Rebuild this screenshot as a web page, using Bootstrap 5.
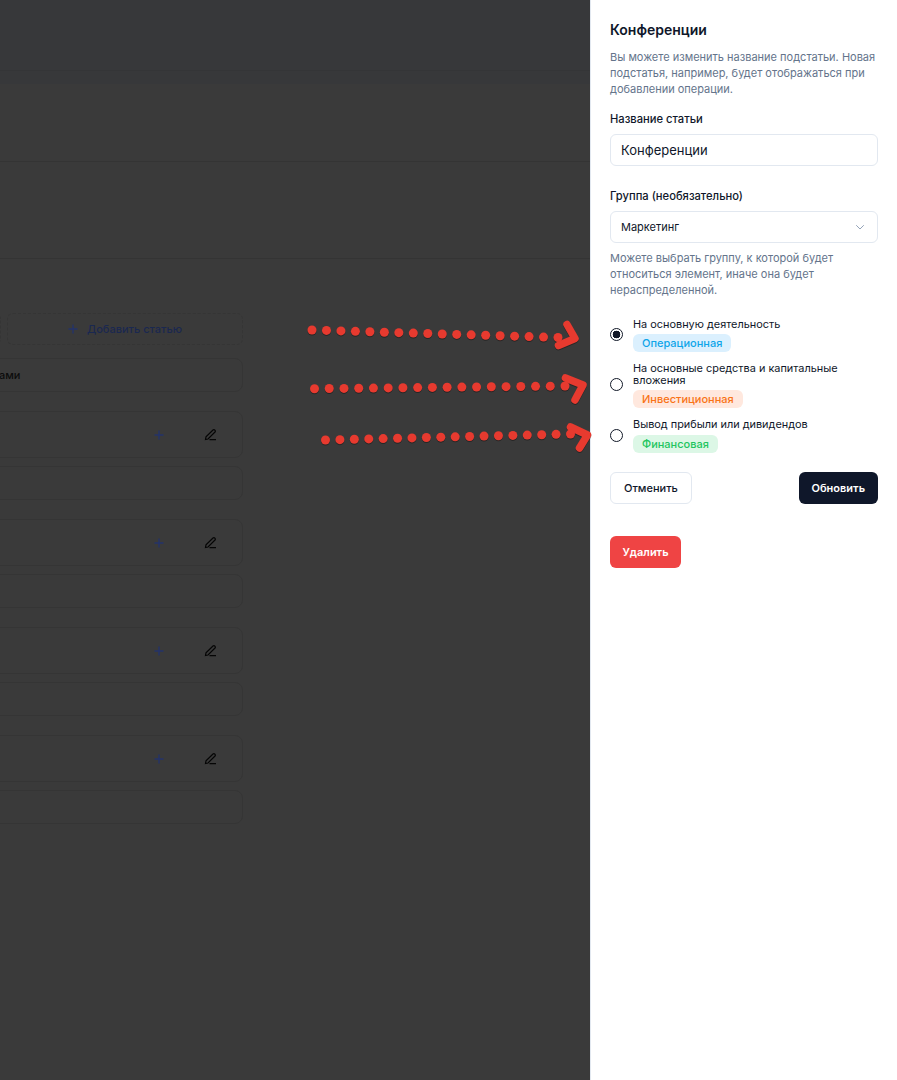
<!DOCTYPE html>
<html lang="ru">
<head>
    <meta charset="UTF-8">
    <meta name="viewport" content="width=device-width, initial-scale=1.0">
    <title>Конференции</title>
    <link rel="stylesheet" href="https://cdn.jsdelivr.net/npm/bootstrap@5.3.2/dist/css/bootstrap.min.css">
    <style>
body {
    font-family: Inter, "Liberation Sans", sans-serif;
    background-color: #3a3a3a;
    height: 1080px;
    overflow: hidden;
}
.page-wrap { position: relative; height: 1080px; }

/* dimmed page behind the drawer */
.dim-side { width: 590px; overflow: hidden; background-color: #3a3a3a; }
.dim-top { height: 84px; background-color: #37383a; }
.dim-top-line { height: 71px; border-bottom: 1px solid #343537; }
.dim-band-a { height: 78px; border-bottom: 1px solid #343434; }
.dim-band-b { height: 97px; border-bottom: 1px solid #343434; }
.dim-list { width: 263px; margin-left: -20px; margin-top: 54px; }
.dim-add-row { gap: 6px; margin-bottom: 13px; }
.dim-add-small { width: 21px; height: 32px; border: 1px dashed #353535; border-radius: 6px; }
.dim-add {
    height: 32px;
    border: 1px dashed #353535;
    border-radius: 6px;
    color: #1a2850;
    font-size: 11px;
    font-weight: 500;
    gap: 9px;
}
.dim-box {
    border: 1px solid #353535;
    border-radius: 8px;
    color: #0c0c0c;
    font-size: 11px;
    font-weight: 500;
}
.dim-h34 { height: 34px; }
.dim-h47 { height: 47px; padding-right: 25px; }
.dim-group { margin-bottom: 19px; }
.dim-group .dim-h47 { margin-bottom: 8px; gap: 40px; }
.dim-first { margin-bottom: 19px; padding-left: 20px; }
.dim-first span { margin-left: -2px; }

/* drawer */
.side-panel {
    width: 307px;
    height: 1080px;
    background-color: #fff;
    border-left: 1px solid #e2e8f0;
    padding: 21px 19px 0 19px;
    color: #0f172a;
}
.panel-title { font-size: 14px; font-weight: 600; line-height: 17px; margin: 0 0 11px 0; }
.panel-note { font-size: 11px; line-height: 16px; color: #64748b; margin: 0; }
.field-label { font-size: 11.2px; font-weight: 500; line-height: 14px; margin: 15px 0 8px 0; display: block; }
.field-label-group { margin-top: 23px; }
.side-panel .form-control,
.side-panel .form-select {
    height: 32px;
    border-color: #e2e8f0;
    border-radius: 6px;
    box-shadow: none;
    color: #0f172a;
}
.side-panel .form-control { font-size: 13px; padding: 0 10px; }
.side-panel .form-select {
    font-size: 11px;
    padding: 0 10px;
    background-size: 10px 10px;
    background-position: right 12px center;
    background-image: url("data:image/svg+xml,%3csvg xmlns='http://www.w3.org/2000/svg' viewBox='0 0 10 10'%3e%3cpath fill='none' stroke='%2394a3b8' stroke-linecap='round' d='M1.5 3.5 5 7l3.5-3.5'/%3e%3c/svg%3e");
}
.group-note { margin-top: 7px; }
.kind-list { margin-top: 19px; gap: 9px; }
.kind-row { gap: 10px; }
.kind-row .form-check-input {
    width: 13px;
    height: 13px;
    margin: 0;
    flex-shrink: 0;
    border: 1px solid #111827;
    background-color: #fff;
    box-shadow: none;
}
.kind-row .form-check-input:checked {
    background-color: #fff;
    border-color: #111827;
    background-image: radial-gradient(circle, #111827 0 3.6px, #fff 4.1px);
}
.kind-text { font-size: 10.9px; line-height: 12px; color: #0f172a; padding-top: 1px; margin-bottom: 4px; }
.kind-row:last-child .kind-text { margin-bottom: 5px; }
.kind-tag {
    display: block;
    width: fit-content;
    height: 18px;
    line-height: 18px;
    padding: 0 9px;
    border-radius: 6px;
    font-size: 11px;
    font-weight: 500;
}
.tag-oper { background-color: #dbf0fe; color: #0ea5e9; }
.tag-inv { background-color: #ffe8de; color: #f97316; }
.tag-fin { background-color: #dcf7e6; color: #22c55e; }
.action-row { margin-top: 19px; }
.act-btn {
    height: 32px;
    font-size: 11px;
    font-weight: 500;
    border-radius: 6px;
    padding: 0 13px;
}
.act-cancel { border: 1px solid #e2e8f0; color: #0f172a; background-color: #fff; }
.act-save { background-color: #0f172a; color: #fff; border: 0; font-weight: 600; }
.act-del { background-color: #ef4444; color: #fff; border: 0; font-weight: 600; margin-top: 32px; width: 71px; padding: 0; }

/* hand drawn arrows, lie over everything */
.arrow-layer { position: absolute; left: 0; top: 0; pointer-events: none; filter: drop-shadow(0.5px 1px 0.7px rgba(0,0,0,.35)); }
.arrow-layer circle { fill: #e73a2f; }
.arrow-layer path { fill: none; stroke: #e73a2f; stroke-width: 7.5; stroke-linecap: round; stroke-linejoin: round; }
    </style>
</head>
<body>
    <div class="page-wrap d-flex">
        <div class="dim-side flex-shrink-0">
            <div class="dim-top"><div class="dim-top-line"></div></div>
            <div class="dim-band-a"></div>
            <div class="dim-band-b"></div>
            <div class="dim-list">
                <div class="d-flex dim-add-row">
                    <div class="dim-add-small"></div>
                    <div class="dim-add flex-grow-1 d-flex align-items-center justify-content-center">
                        <svg width="10" height="10" viewBox="0 0 10 10"><path d="M5 .5v9M.5 5h9" stroke="#24336a" stroke-width="1.4" fill="none"/></svg>
                        Добавить статью
                    </div>
                </div>
                <div class="dim-box dim-h34 dim-first d-flex align-items-center"><span>ами</span></div>
                <div id="dimGroups"></div>
            </div>
        </div>

        <div class="side-panel flex-shrink-0">
            <h5 class="panel-title">Конференции</h5>
            <p class="panel-note">Вы можете изменить название подстатьи. Новая подстатья, например, будет отображаться при добавлении операции.</p>

            <label class="field-label" for="itemName">Название статьи</label>
            <input id="itemName" type="text" class="form-control" value="Конференции">

            <label class="field-label field-label-group" for="itemGroup">Группа (необязательно)</label>
            <select id="itemGroup" class="form-select">
                <option>Маркетинг</option>
            </select>
            <p class="panel-note group-note">Можете выбрать группу, к которой будет относиться элемент, иначе она будет нераспределенной.</p>

            <div class="d-flex flex-column kind-list">
                <div class="d-flex align-items-center kind-row">
                    <input class="form-check-input" type="radio" name="kind" checked>
                    <div>
                        <div class="kind-text">На основную деятельность</div>
                        <span class="kind-tag tag-oper">Операционная</span>
                    </div>
                </div>
                <div class="d-flex align-items-center kind-row">
                    <input class="form-check-input" type="radio" name="kind">
                    <div>
                        <div class="kind-text">На основные средства и капитальные вложения</div>
                        <span class="kind-tag tag-inv">Инвестиционная</span>
                    </div>
                </div>
                <div class="d-flex align-items-center kind-row">
                    <input class="form-check-input" type="radio" name="kind">
                    <div>
                        <div class="kind-text">Вывод прибыли или дивидендов</div>
                        <span class="kind-tag tag-fin">Финансовая</span>
                    </div>
                </div>
            </div>

            <div class="d-flex justify-content-between action-row">
                <button class="btn act-btn act-cancel">Отменить</button>
                <button class="btn act-btn act-save">Обновить</button>
            </div>
            <button class="btn act-btn act-del">Удалить</button>
        </div>

        <svg id="arrows" class="arrow-layer" width="897" height="1080">
            <path d="M567 324.5 575 338.5 558.5 345.5"/>
            <path d="M565.5 378 583 385 575 400"/>
            <path d="M570.5 427 587.5 435 579.5 448"/>
        </svg>
    </div>

    <script>
        // repeated rows behind the overlay
        const groupsEl = document.getElementById('dimGroups');
        for (let i = 0; i < 4; i++) {
            groupsEl.innerHTML += `
                <div class="dim-group">
                    <div class="dim-box dim-h47 d-flex align-items-center justify-content-end">
                        <svg width="10" height="10" viewBox="0 0 10 10"><path d="M5 .5v9M.5 5h9" stroke="#24336a" stroke-width="1.4" fill="none"/></svg>
                        <svg width="13" height="13" viewBox="0 0 13 13"><path d="M1.5 11.5 2 8.9 9 2a1.2 1.2 0 0 1 1.7 0l.3.3a1.2 1.2 0 0 1 0 1.7L4 11ZM5.5 11.6H12" stroke="#050505" stroke-width="1.2" fill="none"/></svg>
                    </div>
                    <div class="dim-box dim-h34"></div>
                </div>`;
        }

        // dotted lines: [x1, y1, x2, y2, count]
        const lines = [
            [312, 330, 558, 337.5, 18],
            [314.5, 388.7, 565, 386, 18],
            [325.5, 440, 570.5, 434, 18]
        ];
        const svg = document.getElementById('arrows');
        lines.forEach(([x1, y1, x2, y2, n]) => {
            for (let i = 0; i < n; i++) {
                const c = document.createElementNS('http://www.w3.org/2000/svg', 'circle');
                c.setAttribute('cx', x1 + (x2 - x1) * i / (n - 1));
                c.setAttribute('cy', y1 + (y2 - y1) * i / (n - 1));
                c.setAttribute('r', 4.5);
                svg.appendChild(c);
            }
        });
    </script>
</body>
</html>
